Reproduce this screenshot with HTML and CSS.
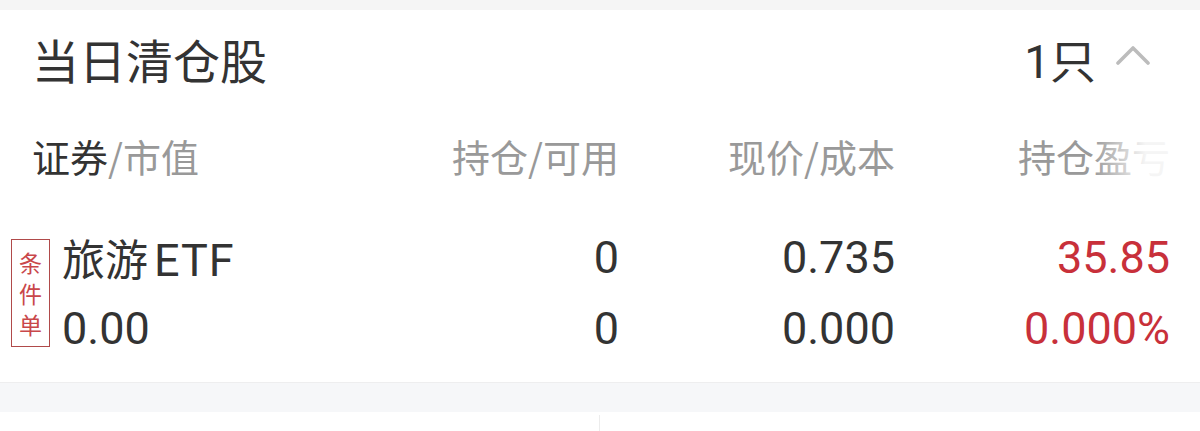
FILE: index.html
```html
<!DOCTYPE html>
<html lang="zh">
<head>
<meta charset="utf-8">
<link rel="stylesheet" href="styles.css">
</head>
<body>
<div class="top-strip"></div>
<section class="card">
  <div class="title-row">
    <h2 class="title">当日清仓股</h2>
    <div class="count">
      <span>1只</span>
      <svg class="chevron" width="34" height="22" viewBox="0 0 34 22"><polyline points="2,19 17,4 32,19" fill="none" stroke="#bcbcbc" stroke-width="3.6" stroke-linecap="round" stroke-linejoin="round"/></svg>
    </div>
  </div>
  <div class="grid head">
    <div class="cell first"><span class="dark">证券</span>/市值</div>
    <div class="cell num">持仓/可用</div>
    <div class="cell num">现价/成本</div>
    <div class="cell num fade">持仓盈亏</div>
  </div>
  <div class="grid data">
    <div class="cell name-cell">
      <div class="badge"><span>条</span><span>件</span><span>单</span></div>
      <div class="lines">
        <div class="line name"><span class="cjk">旅游</span><span class="latin">ETF</span></div>
        <div class="line">0.00</div>
      </div>
    </div>
    <div class="cell num lines"><div class="line">0</div><div class="line">0</div></div>
    <div class="cell num lines"><div class="line">0.735</div><div class="line">0.000</div></div>
    <div class="cell num lines red"><div class="line">35.85</div><div class="line">0.000%</div></div>
  </div>
</section>
<div class="band"></div>
<div class="bottom"><div class="divider"></div></div>
</body>
</html>
```
FILE: styles.css
```css
* { box-sizing: border-box; margin: 0; padding: 0; }
html, body { width: 1200px; height: 431px; overflow: hidden; background: #fff; }
body {
  font-family: Roboto, "Noto Sans CJK SC", sans-serif;
  color: #333;
}
.top-strip { height: 10px; background: #f5f5f5; }
.card { background: #fff; }
.title-row {
  height: 96px;
  display: flex;
  align-items: center;
  justify-content: space-between;
  padding: 0 50px 0 32px;
}
.title {
  font-family: "Noto Sans CJK SC", sans-serif;
  font-weight: 400;
  font-size: 47px;
  color: #333;
}
.count {
  display: flex;
  align-items: center;
  gap: 20px;
  font-size: 46px;
  color: #333;
}
.chevron { display: block; margin-top: -6px; }
.grid {
  display: grid;
  grid-template-columns: 1fr 276px 276px 275px;
  padding: 0 30px 0 11px;
}
.head {
  height: 98px;
  align-items: center;
  font-family: "Noto Sans CJK SC", sans-serif;
  font-size: 38px;
  color: #999;
}
.head .first { padding-left: 21px; }
.head .dark { color: #333; }
.num { text-align: right; }
.fade { position: relative; }
.fade::after {
  content: "";
  position: absolute;
  top: 0; bottom: 0; right: -4px;
  width: 82px;
  background: linear-gradient(to right, rgba(255,255,255,0), rgba(255,255,255,0.9) 65%);
}
.data {
  height: 178px;
  padding-top: 18px;
  padding-bottom: 18px;
}
.name-cell {
  display: flex;
  align-items: center;
  gap: 12px;
}
.badge {
  width: 39px;
  height: 108px;
  border: 1.5px solid #b04a4a;
  display: flex;
  flex-direction: column;
  align-items: center;
  justify-content: center;
  gap: 6px;
  font-family: "Noto Sans CJK SC", sans-serif;
  font-size: 23px;
  line-height: 25px;
  color: #c9474a;
}
.line {
  height: 71px;
  line-height: 71px;
  font-size: 45px;
  white-space: nowrap;
}
.name .cjk {
  font-family: "Noto Sans CJK SC", sans-serif;
  font-size: 43px;
}
.name .latin {
  font-family: Roboto, sans-serif;
  font-size: 45px;
  margin-left: 6px;
  letter-spacing: 1px;
}
.red { color: #c8303a; }
.band {
  height: 30px;
  background: #f6f7f9;
  border-top: 1px solid #eeeeef;
}
.bottom {
  height: 19px;
  background: #fff;
  display: flex;
  padding-left: 599px;
  padding-top: 3px;
}
.divider { width: 1px; background: #ececec; }
```
